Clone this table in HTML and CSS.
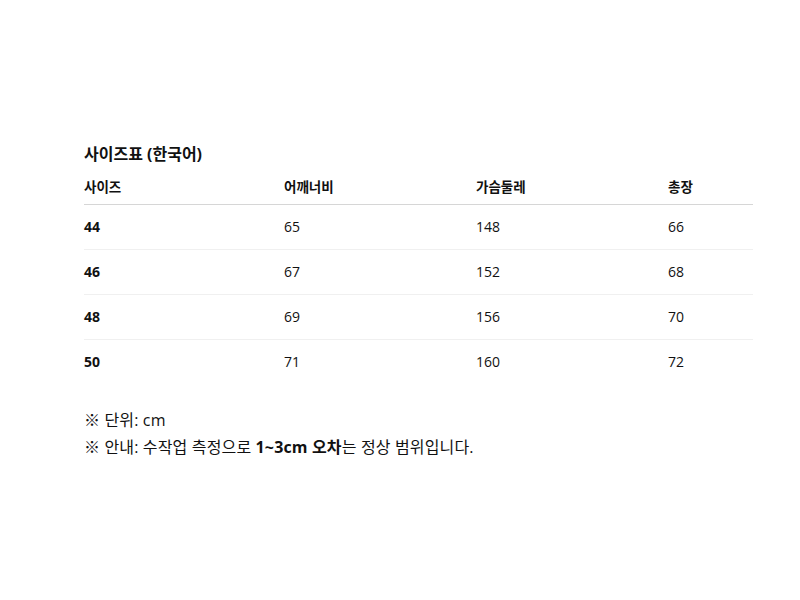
FILE: index.html
```html
<!DOCTYPE html>
<html lang="ko">
<head>
<meta charset="utf-8">
<link rel="stylesheet" href="styles.css">
</head>
<body>
<div class="wrap">
  <h2 class="title">사이즈표 (한국어)</h2>
  <table class="size-table">
    <colgroup>
      <col class="c1"><col class="c2"><col class="c3"><col class="c4">
    </colgroup>
    <thead>
      <tr><th>사이즈</th><th>어깨너비</th><th>가슴둘레</th><th>총장</th></tr>
    </thead>
    <tbody>
      <tr><td class="size">44</td><td>65</td><td>148</td><td>66</td></tr>
      <tr><td class="size">46</td><td>67</td><td>152</td><td>68</td></tr>
      <tr><td class="size">48</td><td>69</td><td>156</td><td>70</td></tr>
      <tr><td class="size">50</td><td>71</td><td>160</td><td>72</td></tr>
    </tbody>
  </table>
  <p class="note">※ 단위: cm</p>
  <p class="note">※ 안내: 수작업 측정으로 <strong>1~3cm 오차</strong>는 정상 범위입니다.</p>
</div>
</body>
</html>
```
FILE: styles.css
```css
html, body {
  margin: 0;
  padding: 0;
  background: #fff;
}
body {
  font-family: "Open Sans", "Noto Sans CJK KR", sans-serif;
  color: #111;
}
.wrap {
  width: 669px;
  margin-left: 84px;
  padding-top: 143px;
}
.title {
  margin: 0 0 12px 0;
  font-size: 16px;
  font-weight: 700;
  line-height: 22px;
}
.size-table {
  width: 669px;
  border-collapse: collapse;
  table-layout: fixed;
}
.c1 { width: 200px; }
.c2 { width: 192px; }
.c3 { width: 192px; }
.c4 { width: 85px; }
.size-table th {
  text-align: left;
  font-size: 13.5px;
  font-weight: 700;
  padding: 0 0 7px 0;
  line-height: 20px;
  border-bottom: 1px solid #d6d6d6;
}
.size-table td {
  font-size: 14px;
  line-height: 20px;
  padding: 12px 0 12px 0;
  border-bottom: 1px solid #f0f0f0;
}
.size-table tbody tr:last-child td {
  border-bottom: none;
}
.size-table td.size {
  font-weight: 700;
}
.note {
  margin: 0;
  font-size: 16px;
  line-height: 27px;
  letter-spacing: 0.15px;
}
.size-table + .note {
  margin-top: 23px;
}
.note strong { font-weight: 700; }
```
